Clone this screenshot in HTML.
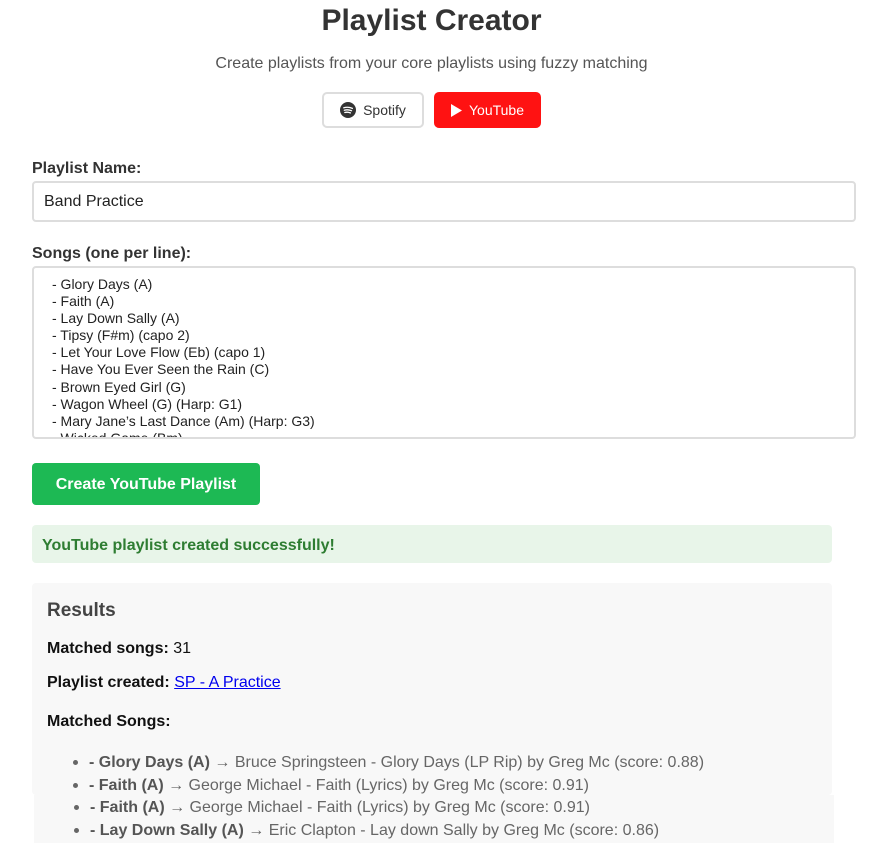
<!DOCTYPE html>
<html><head><meta charset="utf-8"><style>
*{box-sizing:border-box;margin:0;padding:0}
body{width:891px;height:843px;overflow:hidden;background:#fff;font-family:"Liberation Sans",Arial,sans-serif;color:#333;position:relative}
.a{position:absolute}
h1{position:absolute;left:0;width:863px;text-align:center;top:4px;font-size:30px;font-weight:bold;color:#333}
.sub{left:0;width:863px;text-align:center;top:55px;font-size:16px;color:#555}
.btn{top:92px;height:36px;border-radius:5px;font-size:14px;display:flex;align-items:center;justify-content:center;gap:7px}
.lbl{left:32px;font-size:16px;font-weight:bold;color:#333}
.inp{left:32px;width:824px;border:2px solid #ddd;border-radius:4px;background:#fff}
.ta div{font-size:14px;line-height:17.1px;color:#222}
li{list-style:none;position:relative;padding-left:25px;font-size:16px;color:#666;line-height:23px}
li:before{content:"";position:absolute;left:9px;top:9px;width:5px;height:5px;border-radius:50%;background:#666}
li b{color:#555}
</style></head><body>
<h1>Playlist Creator</h1>
<div class="a sub">Create playlists from your core playlists using fuzzy matching</div>
<div class="a btn" style="left:322px;width:102px;border:2px solid #ddd;background:#fff;color:#333">
<svg width="16" height="16" viewBox="0 0 16 16"><circle cx="8" cy="8" r="8" fill="#333"/><path d="M3.8 5.8q4.4-1.3 8.6.6M4.3 8.2q3.6-1 7.2.5M4.8 10.5q2.8-.8 5.6.4" stroke="#fff" stroke-width="1.3" fill="none" stroke-linecap="round"/></svg>Spotify</div>
<div class="a btn" style="left:434px;width:107px;background:#ff1212;color:#fff">
<svg width="11" height="13" viewBox="0 0 11 13"><path d="M0 0L11 6.5L0 13Z" fill="#fff"/></svg>YouTube</div>
<div class="a lbl" style="top:160px">Playlist Name:</div>
<div class="a inp" style="top:181px;height:41px;padding:10px 10px;font-size:16px;color:#222">Band Practice</div>
<div class="a lbl" style="top:245px">Songs (one per line):</div>
<div class="a inp ta" style="top:266px;height:173px;padding:8px 18px;overflow:hidden">
<div>- Glory Days (A)</div><div>- Faith (A)</div><div>- Lay Down Sally (A)</div><div>- Tipsy (F#m) (capo 2)</div><div>- Let Your Love Flow (Eb) (capo 1)</div><div>- Have You Ever Seen the Rain (C)</div><div>- Brown Eyed Girl (G)</div><div>- Wagon Wheel (G) (Harp: G1)</div><div>- Mary Jane’s Last Dance (Am) (Harp: G3)</div><div>- Wicked Game (Bm)</div></div>
<div class="a" style="left:32px;top:463px;width:228px;height:42px;background:#1db954;border-radius:4px;color:#fff;font-weight:bold;font-size:16px;display:flex;align-items:center;justify-content:center;padding-top:2px">Create YouTube Playlist</div>
<div class="a" style="left:32px;top:525px;width:800px;height:38px;background:#e8f5e9;border-radius:4px;color:#2e7d32;font-weight:bold;font-size:16px;padding:12px 10px">YouTube playlist created successfully!</div>
<div class="a" style="left:32px;top:583px;width:800px;height:212px;background:#f8f8f8;border-radius:4px"></div>
<div class="a" style="left:34px;top:795px;width:800px;height:48px;background:#f8f8f8"></div>
<div class="a" style="left:47px;top:600px;font-size:19px;font-weight:bold;color:#444">Results</div>
<div class="a" style="left:47px;top:640px;font-size:16px;color:#111"><b>Matched songs:</b> 31</div>
<div class="a" style="left:47px;top:674px;font-size:16px;color:#111"><b>Playlist created:</b> <span style="color:#00e;text-decoration:underline">SP - A Practice</span></div>
<div class="a" style="left:47px;top:713px;font-size:16px;color:#111;font-weight:bold">Matched Songs:</div>
<ul class="a" style="left:64px;top:751px">
<li><b>- Glory Days (A)</b> → Bruce Springsteen - Glory Days (LP Rip) by Greg Mc (score: 0.88)</li>
<li><b>- Faith (A)</b> → George Michael - Faith (Lyrics) by Greg Mc (score: 0.91)</li>
</ul>
<ul class="a" style="left:65px;top:796px">
<li><b>- Faith (A)</b> → George Michael - Faith (Lyrics) by Greg Mc (score: 0.91)</li>
<li><b>- Lay Down Sally (A)</b> → Eric Clapton - Lay down Sally by Greg Mc (score: 0.86)</li>
</ul>
</body></html>
